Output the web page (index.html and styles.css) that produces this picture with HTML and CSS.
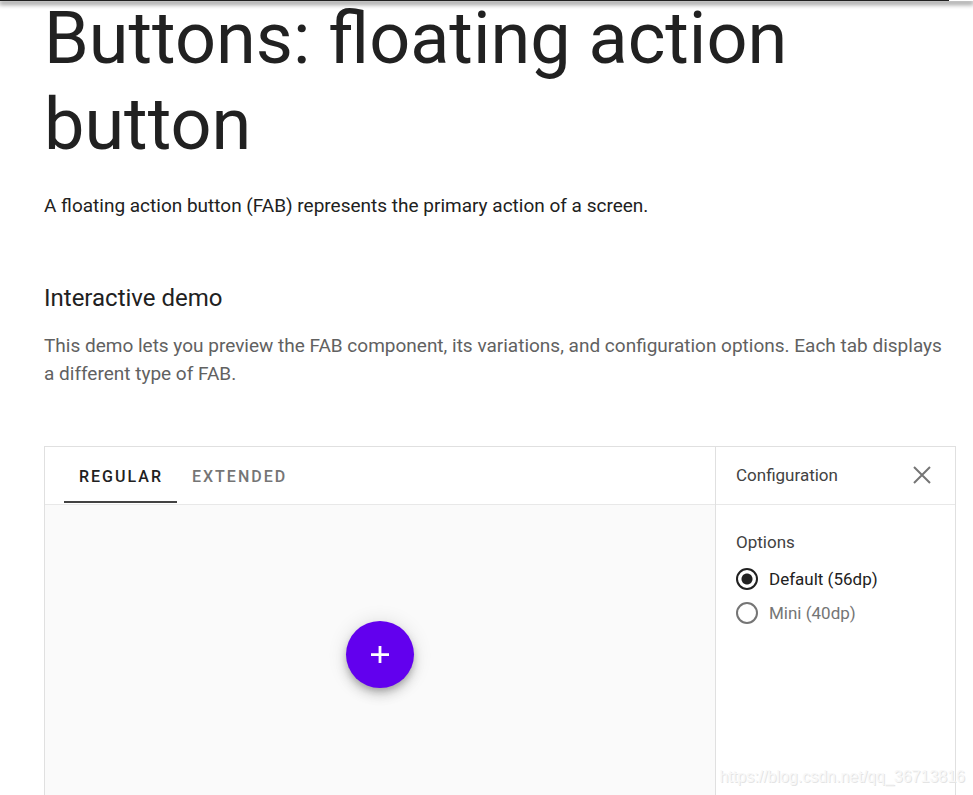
FILE: index.html
```html
<!DOCTYPE html>
<html lang="en">
<head>
<meta charset="utf-8">
<meta name="viewport" content="width=device-width, initial-scale=1">
<title>Buttons: floating action button</title>
<link rel="stylesheet" href="styles.css">
</head>
<body>
<header class="appbar"><div class="appbar-fill"></div></header>
<main class="page">
  <h1 class="title">Buttons: floating action button</h1>
  <p class="lead">A floating action button (FAB) represents the primary action of a screen.</p>
  <h2 class="heading">Interactive demo</h2>
  <p class="intro">This demo lets you preview the FAB component, its variations, and configuration options. Each tab displays a different type of FAB.</p>
  <section class="demo">
    <div class="preview">
      <div class="bar tabs" role="tablist">
        <button class="tab tab-active" type="button" role="tab" aria-selected="true">REGULAR</button>
        <button class="tab" type="button" role="tab" aria-selected="false">EXTENDED</button>
      </div>
      <div class="stage">
        <button class="fab" type="button" aria-label="Add">
          <svg width="18" height="18" viewBox="0 0 18 18" aria-hidden="true"><path d="M0 7.3h7.6V0h2.8v7.3H18v2.6h-7.6V17H7.600V9.900H0z" fill="#fff"/></svg>
        </button>
      </div>
    </div>
    <aside class="config">
      <div class="bar config-bar">
        <h3 class="config-title">Configuration</h3>
        <button class="close" type="button" aria-label="Close">
          <svg width="18" height="18" viewBox="0 0 18 18" aria-hidden="true"><path d="M1 1l16 16M17 1L1 17" fill="none" stroke="#757575" stroke-width="2"/></svg>
        </button>
      </div>
      <fieldset class="options">
        <legend class="legend">Options</legend>
        <div class="option">
          <input class="radio" type="radio" name="size" id="size-default" checked>
          <label for="size-default">Default (56dp)</label>
        </div>
        <div class="option option-off">
          <input class="radio" type="radio" name="size" id="size-mini">
          <label for="size-mini">Mini (40dp)</label>
        </div>
      </fieldset>
    </aside>
  </section>
</main>
<div class="watermark">https://blog.csdn.net/qq_36713816</div>
</body>
</html>
```
FILE: styles.css
```css
* {
  box-sizing: border-box;
}

body {
  margin: 0;
  min-height: 100vh;
  display: flex;
  flex-direction: column;
  position: relative;
  background: #fff;
  color: #212121;
  font-family: Roboto, "Liberation Sans", sans-serif;
}

button {
  border: 0;
  padding: 0;
  background: none;
  font: inherit;
  color: inherit;
}

.appbar {
  height: 1px;
  padding-right: 24px;
  background: #fff;
  box-shadow: 0 2px 5px 1px rgba(0, 0, 0, 0.6);
}

.appbar-fill {
  height: 1px;
  background: #212121;
}

.page {
  flex: 1;
  display: flex;
  flex-direction: column;
  padding: 0 17px 0 44px;
}

.title {
  margin: -5px 0 0;
  font-size: 72px;
  line-height: 86px;
  font-weight: 400;
}

.lead {
  margin: 24px 0 0;
  font-size: 19px;
  line-height: 28px;
}

.heading {
  margin: 64px 0 0;
  font-size: 24px;
  line-height: 28px;
  font-weight: 400;
}

.intro {
  margin: 20px 0 0;
  font-size: 19px;
  line-height: 28px;
  color: #616161;
}

.demo {
  flex: 1;
  display: flex;
  margin-top: 58px;
  border: 1px solid #e0e0e0;
  border-bottom: 0;
}

.preview {
  flex: 1;
  display: flex;
  flex-direction: column;
}

.bar {
  display: flex;
  height: 58px;
  border-bottom: 1px solid #e8e8e8;
}

.tabs {
  padding: 0 19px 1px;
}

.tab {
  padding: 4px 14px 0 15px;
  font-size: 16px;
  font-weight: 500;
  letter-spacing: 2px;
  color: #757575;
  border-bottom: 2px solid transparent;
}

.tab-active {
  color: #212121;
  border-bottom-color: #424242;
}

.stage {
  flex: 1;
  display: flex;
  justify-content: center;
  align-items: flex-start;
  padding-top: 116px;
  background: #fafafa;
}

.fab {
  display: flex;
  align-items: center;
  justify-content: center;
  width: 68px;
  height: 67px;
  border-radius: 50%;
  background: #6200ee;
  box-shadow: 0 4px 6px -1px rgba(0, 0, 0, 0.2), 0 7px 12px rgba(0, 0, 0, 0.14), 0 1px 20px rgba(0, 0, 0, 0.12);
}

.config {
  width: 240px;
  border-left: 1px solid #e0e0e0;
}

.config-bar {
  align-items: center;
  justify-content: space-between;
  padding: 0 24px 2px 20px;
}

.config-title {
  margin: 0;
  font-size: 17px;
  font-weight: 400;
  color: #424242;
}

.close {
  display: flex;
}

.options {
  margin: 0;
  border: 0;
  padding: 25px 20px;
}

.legend {
  float: left;
  width: 100%;
  padding: 0;
  margin-bottom: 8px;
  font-size: 17px;
  line-height: 24px;
  color: #424242;
}

.option {
  clear: both;
  display: flex;
  align-items: center;
  gap: 11px;
  height: 34px;
  font-size: 17px;
}

.option-off {
  color: #757575;
}

.radio {
  appearance: none;
  width: 22px;
  height: 22px;
  margin: 0;
  border: 2px solid #757575;
  border-radius: 50%;
}

.radio:checked {
  border-color: #212121;
  background: radial-gradient(circle, #212121 5px, transparent 6px);
}

.watermark {
  position: absolute;
  right: 8px;
  bottom: 8px;
  font-family: "Liberation Sans", sans-serif;
  font-size: 16px;
  line-height: 20px;
  color: #f8f8f8;
  text-shadow: 1px 1px 0 #e4e4e4;
}
```
